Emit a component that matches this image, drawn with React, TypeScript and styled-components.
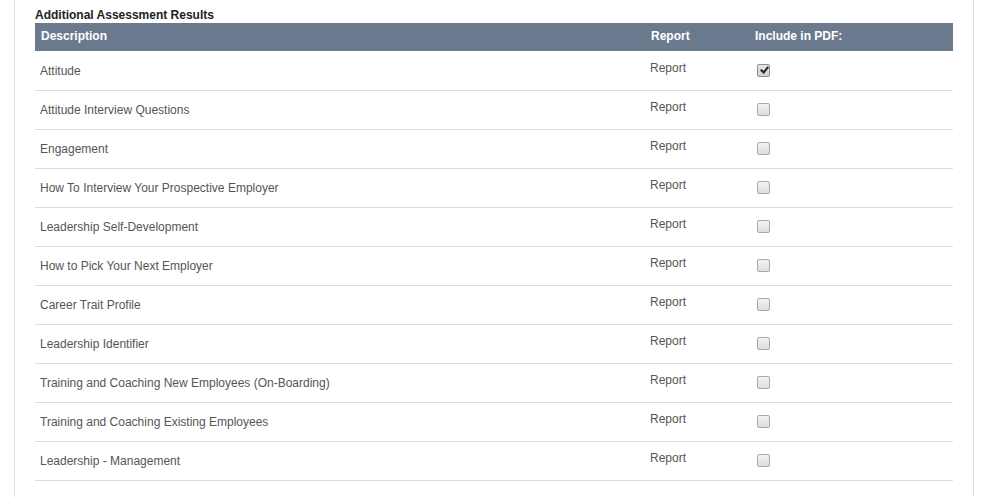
import React, { useState } from "react";
import styled, { createGlobalStyle } from "styled-components";

const Global = createGlobalStyle`
  html, body { margin: 0; padding: 0; background: #fff; }
  body { font-family: "Liberation Sans", Arial, sans-serif; font-size: 12px; }
`;

const Panel = styled.div`
  margin-left: 14px;
  width: 960px;
  height: 497px;
  box-sizing: border-box;
  border-left: 1px solid #dddddd;
  border-right: 1px solid #dddddd;
  padding: 8px 20px 0 20px;
`;

const Title = styled.div`
  font-weight: bold;
  font-size: 12px;
  line-height: 14px;
  color: #222;
  height: 15px;
`;

const Grid = styled.div`
  display: grid;
  grid-template-columns: 610px 110px 1fr;
`;

const HeaderRow = styled(Grid)`
  background: #6b7a8f;
  height: 28px;
  align-items: center;
  color: #fff;
  font-weight: bold;
  font-size: 12px;
`;

const HeaderCell = styled.div<{ $pad: number }>`
  padding-left: ${(p) => p.$pad}px;
  padding-bottom: 2px;
`;

const Body = styled.div`
  padding-top: 1px;
`;

const Row = styled(Grid)`
  height: 39px;
  box-sizing: border-box;
  border-bottom: 1px solid #dddddd;
  color: #555;
  font-size: 12px;
`;

const DescCell = styled.div`
  padding-left: 5px;
  display: flex;
  align-items: center;
  padding-bottom: 1px;
`;

const ReportCell = styled.div`
  padding-left: 5px;
  padding-top: 9px;
  line-height: 14px;
`;

const CheckCell = styled.div`
  padding-left: 2px;
  padding-top: 12px;
`;

const Check = styled.input.attrs({ type: "checkbox" })`
  appearance: none;
  -webkit-appearance: none;
  margin: 0;
  width: 13px;
  height: 13px;
  box-sizing: border-box;
  border: 1px solid #a9a9a9;
  border-radius: 2px;
  background: linear-gradient(#f2f2f2, #dedede);
  position: relative;
  display: block;
  cursor: pointer;
  &:checked {
    background: linear-gradient(#e6e6e6, #cfcfcf);
    border-color: #8f8f8f;
  }
  &:checked::after {
    content: "";
    position: absolute;
    left: 3.5px;
    top: 0px;
    width: 3px;
    height: 6px;
    border: solid #222;
    border-width: 0 2.5px 2.5px 0;
    transform: rotate(40deg);
  }
`;

const items = [
  "Attitude",
  "Attitude Interview Questions",
  "Engagement",
  "How To Interview Your Prospective Employer",
  "Leadership Self-Development",
  "How to Pick Your Next Employer",
  "Career Trait Profile",
  "Leadership Identifier",
  "Training and Coaching New Employees (On-Boarding)",
  "Training and Coaching Existing Employees",
  "Leadership - Management",
];

export default function App() {
  const [checked, setChecked] = useState<boolean[]>(items.map((_, i) => i === 0));
  return (
    <>
      <Global />
      <Panel>
        <Title>Additional Assessment Results</Title>
        <HeaderRow>
          <HeaderCell $pad={6}>Description</HeaderCell>
          <HeaderCell $pad={6}>Report</HeaderCell>
          <HeaderCell $pad={0}>Include in PDF:</HeaderCell>
        </HeaderRow>
        <Body>
          {items.map((name, i) => (
            <Row key={name}>
              <DescCell>{name}</DescCell>
              <ReportCell>Report</ReportCell>
              <CheckCell>
                <Check
                  checked={checked[i]}
                  onChange={() =>
                    setChecked((c) => c.map((v, j) => (j === i ? !v : v)))
                  }
                />
              </CheckCell>
            </Row>
          ))}
        </Body>
      </Panel>
    </>
  );
}
